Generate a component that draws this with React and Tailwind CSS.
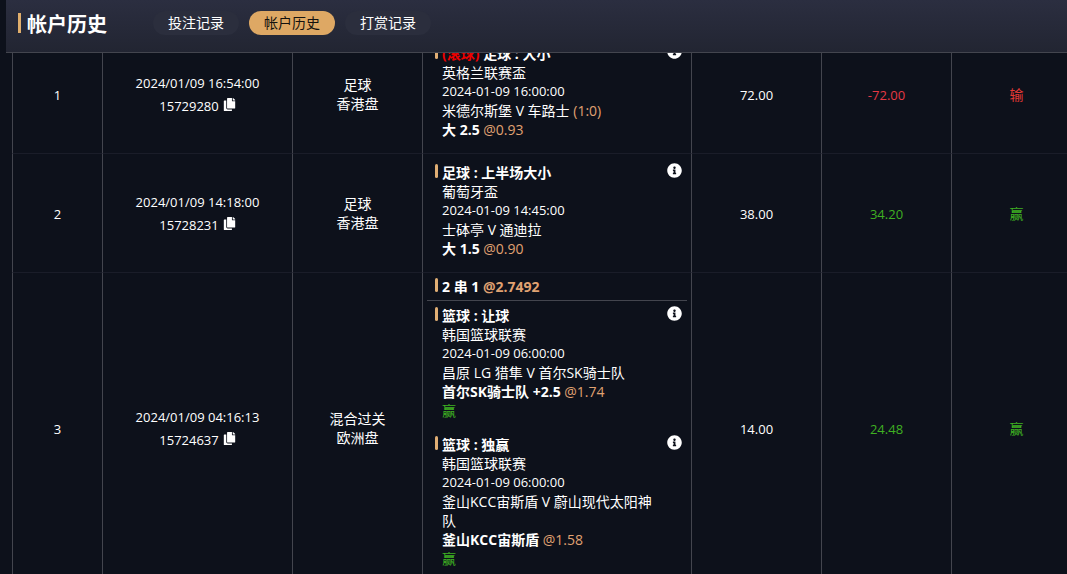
import { useState } from "react";
import { FaCopy, FaInfoCircle } from "react-icons/fa";

const TABS = ["投注记录", "帐户历史", "打赏记录"];

const RECORDS = [
  {
    no: 1,
    time: "2024/01/09 16:54:00",
    id: "15729280",
    sport: "足球",
    market: "香港盘",
    bets: [
      {
        live: "(滚球)",
        title: "足球 : 大小",
        league: "英格兰联赛盃",
        start: "2024-01-09 16:00:00",
        match: "米德尔斯堡 V 车路士",
        score: "(1:0)",
        pick: "大 2.5",
        odds: "@0.93",
      },
    ],
    stake: "72.00",
    profit: "-72.00",
    result: "输",
  },
  {
    no: 2,
    time: "2024/01/09 14:18:00",
    id: "15728231",
    sport: "足球",
    market: "香港盘",
    bets: [
      {
        title: "足球 : 上半场大小",
        league: "葡萄牙盃",
        start: "2024-01-09 14:45:00",
        match: "士砵亭 V 通迪拉",
        pick: "大 1.5",
        odds: "@0.90",
      },
    ],
    stake: "38.00",
    profit: "34.20",
    result: "赢",
  },
  {
    no: 3,
    time: "2024/01/09 04:16:13",
    id: "15724637",
    sport: "混合过关",
    market: "欧洲盘",
    parlay: { name: "2 串 1", odds: "@2.7492" },
    bets: [
      {
        title: "篮球 : 让球",
        league: "韩国篮球联赛",
        start: "2024-01-09 06:00:00",
        match: "昌原 LG 猎隼 V 首尔SK骑士队",
        pick: "首尔SK骑士队 +2.5",
        odds: "@1.74",
        result: "赢",
      },
      {
        title: "篮球 : 独赢",
        league: "韩国篮球联赛",
        start: "2024-01-09 06:00:00",
        match: "釜山KCC宙斯盾 V 蔚山现代太阳神队",
        pick: "釜山KCC宙斯盾",
        odds: "@1.58",
        result: "赢",
      },
    ],
    stake: "14.00",
    profit: "24.48",
    result: "赢",
  },
];

function Marker() {
  return <span className="mt-px h-[14px] w-[3px] shrink-0 rounded-sm bg-[#e0ae74]" />;
}

function Bet({ bet }) {
  return (
    <div className="flex items-start gap-1 pl-2 pr-[5px]">
      <Marker />
      <div className="min-w-0 flex-1 pr-2">
        <p className="font-bold">
          {bet.live && <span className="text-[#f00000]">{bet.live} </span>}
          {bet.title}
        </p>
        <p>{bet.league}</p>
        <p className="text-[13px]">{bet.start}</p>
        <p>
          {bet.match}
          {bet.score && <span className="text-[#e0a272]"> {bet.score}</span>}
        </p>
        <p>
          <span className="font-bold">{bet.pick}</span>{" "}
          <span className="text-[#e0a272]">{bet.odds}</span>
        </p>
        {bet.result && <p className="text-[#3fb022]">{bet.result}</p>}
      </div>
      <button type="button" aria-label="详情" className="shrink-0 cursor-pointer">
        <FaInfoCircle size={15} />
      </button>
    </div>
  );
}

function Record({ record }) {
  const { parlay } = record;
  const lost = record.profit.startsWith("-");
  const cell = "border-b border-l border-b-[#1a1d29] border-l-[#43454e] text-center align-middle";
  const numeric = `${cell} pt-0.5 text-[13px]`;

  return (
    <tr>
      <td className={numeric}>{record.no}</td>
      <td className={`${numeric} leading-[23px]`}>
        <p>{record.time}</p>
        <p className="flex items-center justify-center gap-1">
          {record.id}
          <button type="button" aria-label="复制" className="cursor-pointer pb-1">
            <FaCopy size={13} />
          </button>
        </p>
      </td>
      <td className={cell}>
        <p>{record.sport}</p>
        <p>{record.market}</p>
      </td>
      <td className="border-b border-l border-b-[#1a1d29] border-l-[#43454e] px-1 align-middle">
        {parlay && (
          <div className="flex gap-1 border-b border-[#43454e] py-1 pl-2 font-bold">
            <Marker />
            <p>
              {parlay.name} <span className="text-[#e0a272]">{parlay.odds}</span>
            </p>
          </div>
        )}
        <div
          className={
            parlay ? "flex flex-col gap-[15px] pb-[15px] pt-[5px]" : "pb-[14px] pt-[9px]"
          }
        >
          {record.bets.map((bet) => (
            <Bet key={bet.title} bet={bet} />
          ))}
        </div>
      </td>
      <td className={numeric}>{record.stake}</td>
      <td className={`${numeric} ${lost ? "text-[#e53945]" : "text-[#3fb022]"}`}>
        {record.profit}
      </td>
      <td className={`${cell} ${lost ? "text-[#e53935]" : "text-[#3fb022]"}`}>
        {record.result}
      </td>
    </tr>
  );
}

export default function App() {
  const [active, setActive] = useState("帐户历史");

  return (
    <div
      lang="zh-CN"
      className="flex h-screen flex-col overflow-hidden bg-[#0d111b] pl-1.5 font-['Open_Sans','Noto_Sans_CJK_SC',sans-serif] text-sm leading-[19px] text-white"
    >
      <header className="z-10 flex shrink-0 items-start border-b border-[#43454e] bg-linear-to-b from-[#2b2e40] to-[#222532] pb-[17px] pl-3 pt-[11px]">
        <div className="flex h-6 items-center gap-1.5">
          <span className="h-5 w-[3px] bg-[#e0ae6c]" />
          <h1 className="pt-[3px] text-xl font-bold leading-6">帐户历史</h1>
        </div>
        <nav className="ml-[46px] flex gap-2.5">
          {TABS.map((tab) => (
            <button
              key={tab}
              type="button"
              onClick={() => setActive(tab)}
              className={`h-6 cursor-pointer rounded-full px-[15px] pb-0.5 ${
                tab === active ? "bg-[#dea864] text-[#14120f]" : "bg-[#2b2e3d] text-white"
              }`}
            >
              {tab}
            </button>
          ))}
        </nav>
      </header>

      <main className="min-h-0 flex-1 overflow-hidden pl-1.5">
        <table className="-mt-[18px] w-full min-w-[1069px] table-fixed border-separate border-spacing-0">
          <colgroup>
            <col className="w-[90px]" />
            <col className="w-[190px]" />
            <col className="w-[130px]" />
            <col className="w-[269px]" />
            <col className="w-[130px]" />
            <col className="w-[130px]" />
            <col className="w-[130px]" />
          </colgroup>
          <tbody>
            {RECORDS.map((record) => (
              <Record key={record.no} record={record} />
            ))}
          </tbody>
        </table>
      </main>
    </div>
  );
}
